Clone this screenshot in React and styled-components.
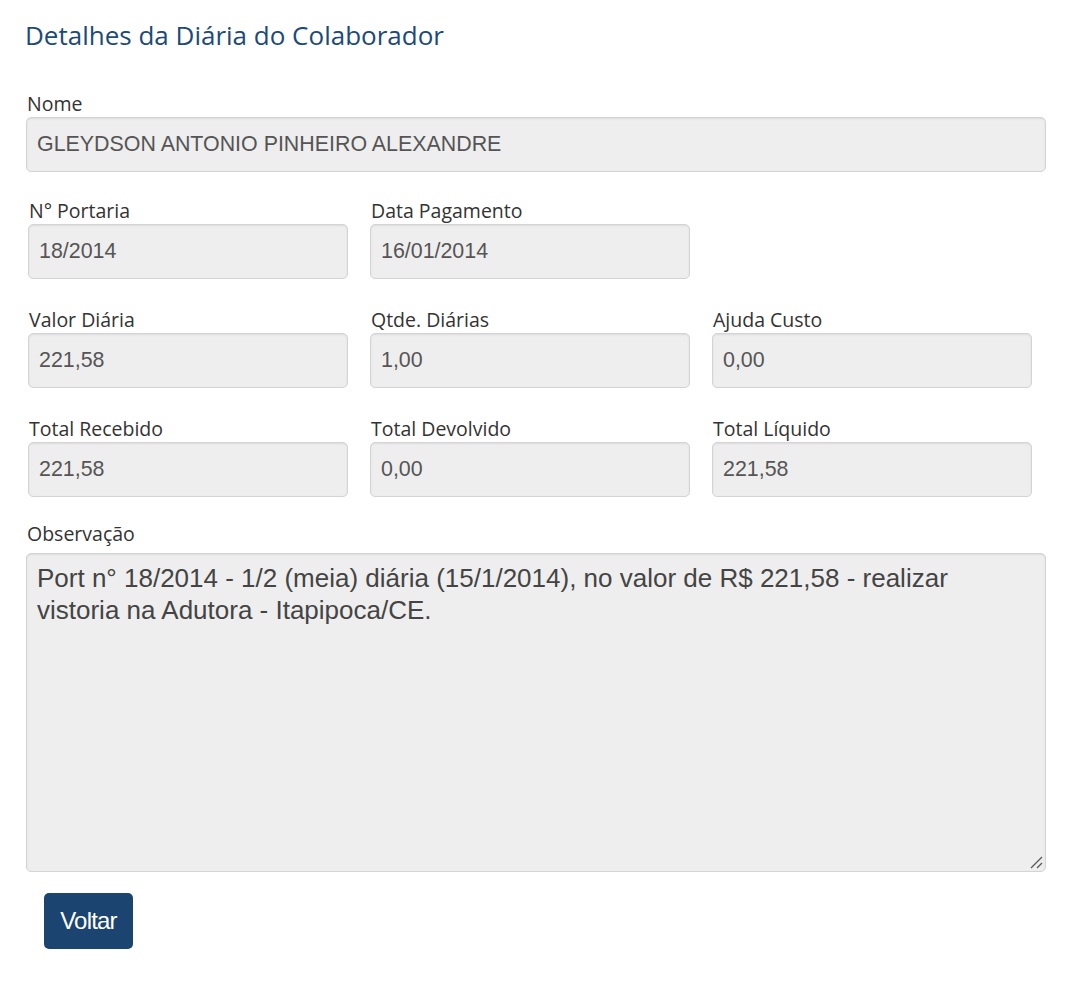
import React from "react";
import styled, { createGlobalStyle } from "styled-components";

const GlobalStyle = createGlobalStyle`
  body {
    margin: 0;
    background: #ffffff;
    font-family: "Open Sans", "Liberation Sans", sans-serif;
  }
`;

const Page = styled.div`
  width: 1080px;
  padding: 18px 0 40px 26px;
  box-sizing: border-box;
`;

const Title = styled.h1`
  margin: 0 0 42px -1px;
  font-family: "Open Sans", sans-serif;
  font-size: 26px;
  font-weight: 400;
  line-height: 34px;
  color: #1d4a78;
`;

const Field = styled.div`
  display: flex;
  flex-direction: column;
  width: ${(p) => (p.wide ? "1020px" : "320px")};
  margin-bottom: ${(p) => p.spacing ?? 29}px;
`;

const Label = styled.label`
  font-family: "Open Sans", sans-serif;
  font-size: 19.5px;
  line-height: 20px;
  color: #333333;
  padding-left: 1px;
  margin-bottom: ${(p) => p.gap ?? 3}px;
`;

const Input = styled.div`
  box-sizing: border-box;
  height: 55px;
  padding: 0 10px;
  display: flex;
  align-items: center;
  background: #eeeeee;
  border: 1px solid #d4d4d4;
  border-radius: 5px;
  box-shadow: inset 0 1px 2px rgba(0, 0, 0, 0.08);
  font-family: "Liberation Sans", Arial, sans-serif;
  font-size: 21.4px;
  color: #555555;
`;

const Row = styled.div`
  display: grid;
  grid-template-columns: repeat(3, 320px);
  column-gap: 22px;
  padding-left: 2px;
  margin-bottom: ${(p) => p.spacing ?? 31}px;

  & > ${Field} {
    margin-bottom: 0;
  }
`;

const TextArea = styled.div`
  position: relative;
  box-sizing: border-box;
  height: 319px;
  padding: 8px 10px;
  background: #eeeeee;
  border: 1px solid #d4d4d4;
  border-radius: 5px;
  box-shadow: inset 0 1px 2px rgba(0, 0, 0, 0.08);
  font-family: "Liberation Sans", Arial, sans-serif;
  font-size: 26px;
  line-height: 32px;
  color: #444444;
`;

const Grip = styled.svg`
  position: absolute;
  right: 2px;
  bottom: 2px;
`;

const Button = styled.button`
  margin-left: 18px;
  width: 89px;
  height: 56px;
  padding: 0;
  border: none;
  border-radius: 5px;
  background: #1b4470;
  color: #ffffff;
  font-family: "Liberation Sans", Arial, sans-serif;
  font-size: 24px;
  letter-spacing: -0.8px;
  cursor: pointer;
`;

const rows = [
  [
    { label: "N° Portaria", value: "18/2014" },
    { label: "Data Pagamento", value: "16/01/2014" },
  ],
  [
    { label: "Valor Diária", value: "221,58" },
    { label: "Qtde. Diárias", value: "1,00" },
    { label: "Ajuda Custo", value: "0,00" },
  ],
  [
    { label: "Total Recebido", value: "221,58" },
    { label: "Total Devolvido", value: "0,00" },
    { label: "Total Líquido", value: "221,58" },
  ],
];

const App = () => {
  return (
    <Page>
      <GlobalStyle />
      <Title>Detalhes da Diária do Colaborador</Title>
      <Field wide>
        <Label>Nome</Label>
        <Input>GLEYDSON ANTONIO PINHEIRO ALEXANDRE</Input>
      </Field>
      {rows.map((row, i) => (
        <Row key={i} spacing={i === rows.length - 1 ? 27 : 31}>
          {row.map((f) => (
            <Field key={f.label}>
              <Label>{f.label}</Label>
              <Input>{f.value}</Input>
            </Field>
          ))}
        </Row>
      ))}
      <Field wide spacing={21}>
        <Label gap={9}>Observação</Label>
        <TextArea>
          Port n° 18/2014 - 1/2 (meia) diária (15/1/2014), no valor de R$
          221,58 - realizar vistoria na Adutora - Itapipoca/CE.
          <Grip width="14" height="14" viewBox="0 0 14 14">
            <path d="M2 13 L13 2" stroke="#555" strokeWidth="1.2" />
            <path d="M8 13 L13 8" stroke="#555" strokeWidth="1.2" />
          </Grip>
        </TextArea>
      </Field>
      <Button>Voltar</Button>
    </Page>
  );
};

export default App;
